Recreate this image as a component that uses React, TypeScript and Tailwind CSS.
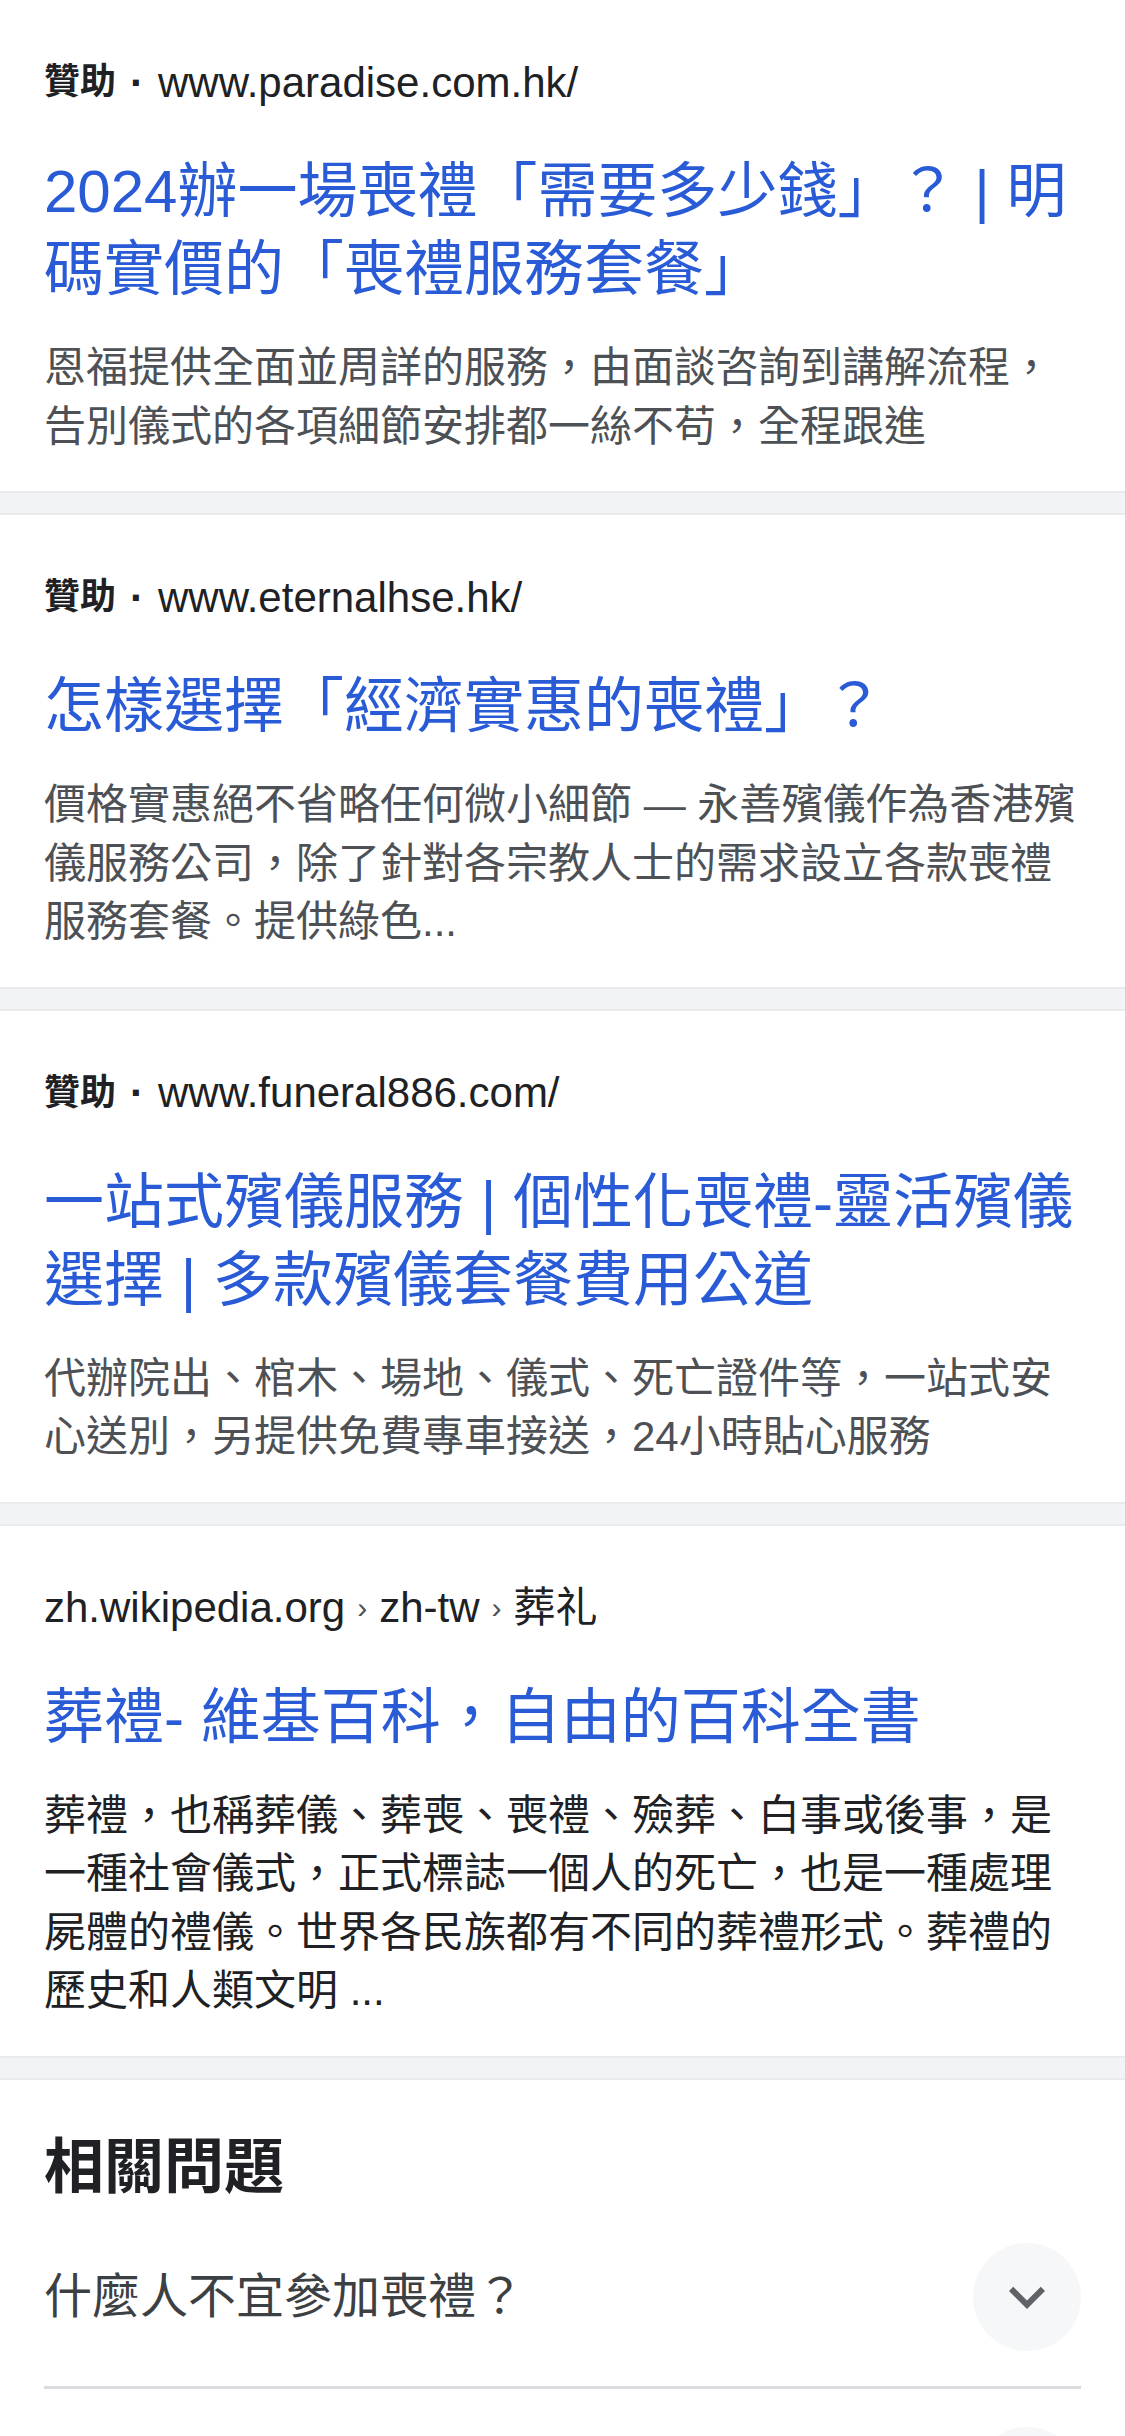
const FONT = "font-['Liberation_Sans','Noto_Sans_CJK_TC',sans-serif]";

type Result = {
  sponsored?: string;
  crumbs?: string[];
  title: string[];
  desc: string[];
  organic?: boolean;
};

const RESULTS: Result[] = [
  {
    sponsored: 'www.paradise.com.hk/',
    title: ['2024辦一場喪禮「需要多少錢」？ | 明', '碼實價的「喪禮服務套餐」'],
    desc: ['恩福提供全面並周詳的服務，由面談咨詢到講解流程，', '告別儀式的各項細節安排都一絲不苟，全程跟進'],
  },
  {
    sponsored: 'www.eternalhse.hk/',
    title: ['怎樣選擇「經濟實惠的喪禮」？'],
    desc: [
      '價格實惠絕不省略任何微小細節 — 永善殯儀作為香港殯',
      '儀服務公司，除了針對各宗教人士的需求設立各款喪禮',
      '服務套餐。提供綠色...',
    ],
  },
  {
    sponsored: 'www.funeral886.com/',
    title: ['一站式殯儀服務 | 個性化喪禮-靈活殯儀', '選擇 | 多款殯儀套餐費用公道'],
    desc: ['代辦院出、棺木、場地、儀式、死亡證件等，一站式安', '心送別，另提供免費專車接送，24小時貼心服務'],
  },
  {
    crumbs: ['zh.wikipedia.org', 'zh-tw', '葬礼'],
    title: ['葬禮- 維基百科，自由的百科全書'],
    desc: [
      '葬禮，也稱葬儀、葬喪、喪禮、殮葬、白事或後事，是',
      '一種社會儀式，正式標誌一個人的死亡，也是一種處理',
      '屍體的禮儀。世界各民族都有不同的葬禮形式。葬禮的',
      '歷史和人類文明 ...',
    ],
    organic: true,
  },
];

function Gap() {
  return <div className="h-[24px] bg-[#f1f3f4] border-y-2 border-[#e9ebee]" />;
}

function ResultCard({ r }: { r: Result }) {
  return (
    <div className="bg-white px-[44px] pt-[55px] pb-[35px]">
      {/* source line */}
      <div className="flex items-center h-[54px] text-[42px] text-[#202124] whitespace-nowrap">
        {r.sponsored ? (
          <>
            <span className="text-[36px] font-bold">贊助</span>
            <span className="mx-[14px] font-bold">·</span>
            <span>{r.sponsored}</span>
          </>
        ) : (
          r.crumbs?.map((c, i) => (
            <span key={i} className="flex items-center">
              {i > 0 && <span className="mx-[12px] text-[30px] text-[#4d5156]">›</span>}
              <span>{c}</span>
            </span>
          ))
        )}
      </div>

      <div className="mt-[44px] text-[60px] leading-[78px] text-[#2a5bd7]">
        {r.title.map((t, i) => (
          <div key={i} className="whitespace-nowrap">{t}</div>
        ))}
      </div>

      <div
        className={`mt-[30px] text-[42px] leading-[58.5px] ${r.organic ? 'text-[#202124]' : 'text-[#4d5156]'}`}
      >
        {r.desc.map((d, i) => (
          <div key={i} className="whitespace-nowrap">{d}</div>
        ))}
      </div>
    </div>
  );
}

function ExpandButton() {
  return (
    <div className="w-[108px] h-[108px] rounded-full bg-[#f6f7f8] flex items-center justify-center shrink-0">
      <svg width="72" height="72" viewBox="0 0 24 24" fill="#5f6368">
        <path d="M7.41 8.59 12 13.17l4.59-4.58L18 10l-6 6-6-6z" />
      </svg>
    </div>
  );
}

export default function App() {
  return (
    <div className={`${FONT} w-[1125px] h-[2436px] bg-white overflow-hidden`}>
      {RESULTS.map((r, i) => (
        <div key={i}>
          <ResultCard r={r} />
          <Gap />
        </div>
      ))}

      {/* related questions */}
      <div className="px-[44px] pt-[52px]">
        <h2 className="text-[60px] leading-[72px] font-bold text-[#202124]">相關問題</h2>
        <div className="mt-[39px]">
          <div className="flex items-center justify-between h-[108px]">
            <span className="text-[48px] text-[#3c4043]">什麼人不宜參加喪禮？</span>
            <ExpandButton />
          </div>
          <div className="mt-[35px] h-[3px] bg-[#dadce0]" />
          <div className="mt-[38px] flex justify-end">
            <ExpandButton />
          </div>
        </div>
      </div>
    </div>
  );
}
